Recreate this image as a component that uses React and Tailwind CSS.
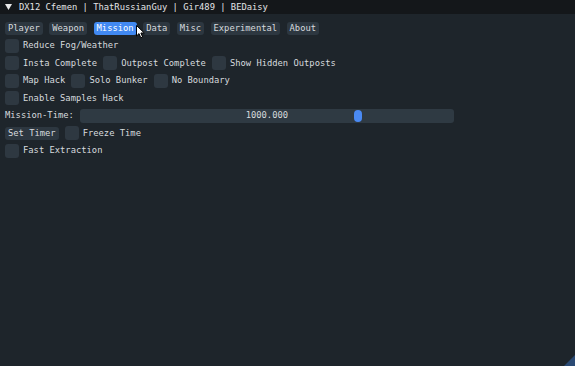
import React from "react";

const font = { fontFamily: '"DejaVu Sans Mono", "Liberation Mono", monospace' };

function Tab({ label, active }) {
  return (
    <div
      className={
        "h-[13px] px-[3px] flex items-center rounded-[3px] leading-none " +
        (active ? "bg-[#4189f2] text-white" : "bg-[#2d3740] text-[#d6dade]")
      }
    >
      {label}
    </div>
  );
}

function Check({ label }) {
  return (
    <div className="flex items-center gap-[4px]">
      <div className="w-[14px] h-[14px] rounded-[3px] bg-[#2e3841]" />
      <span className="leading-none">{label}</span>
    </div>
  );
}

function Row({ children }) {
  return <div className="h-[14px] flex items-center gap-[6px]">{children}</div>;
}

export default function App() {
  const tabs = ["Player", "Weapon", "Mission", "Data", "Misc", "Experimental", "About"];
  return (
    <div
      className="relative w-[575px] h-[366px] overflow-hidden bg-[#1e252b] text-[8.8px] text-[#d6dade]"
      style={font}
    >
      <div className="h-[14px] bg-[#14171a] flex items-center pl-[5px] gap-[7px] text-[#e2e4e6]">
        <svg width="7" height="6" viewBox="0 0 7 6">
          <path d="M0 0 L7 0 L3.5 6 Z" fill="#e8e8e8" />
        </svg>
        <span className="leading-none">DX12 Cfemen | ThatRussianGuy | Gir489 | BEDaisy</span>
      </div>

      <div className="flex flex-col gap-[3.5px] pt-[7px] px-[5px]">
        <div className="h-[14px] flex items-center gap-[6.5px]">
          {tabs.map((t) => (
            <Tab key={t} label={t} active={t === "Mission"} />
          ))}
        </div>
        <Row>
          <Check label="Reduce Fog/Weather" />
        </Row>
        <Row>
          <Check label="Insta Complete" />
          <Check label="Outpost Complete" />
          <Check label="Show Hidden Outposts" />
        </Row>
        <Row>
          <Check label="Map Hack" />
          <Check label="Solo Bunker" />
          <Check label="No Boundary" />
        </Row>
        <Row>
          <Check label="Enable Samples Hack" />
        </Row>
        <Row>
          <span className="leading-none">Mission-Time:</span>
          <div className="relative w-[374px] h-[14px] rounded-[3px] bg-[#2f3a43] flex items-center justify-center">
            <span className="leading-none">1000.000</span>
            <div className="absolute left-[274px] top-[1px] w-[8px] h-[12px] rounded-[4px] bg-[#4a8af4]" />
          </div>
        </Row>
        <Row>
          <div className="h-[13px] px-[3px] flex items-center rounded-[3px] bg-[#2d3740] leading-none">
            Set Timer
          </div>
          <Check label="Freeze Time" />
        </Row>
        <Row>
          <Check label="Fast Extraction" />
        </Row>
      </div>

      <svg className="absolute right-0 bottom-0" width="11" height="11" viewBox="0 0 11 11">
        <path d="M11 0 L11 11 L0 11 Z" fill="#2a4a74" />
      </svg>

      <svg className="absolute left-[136px] top-[25px]" width="10" height="14" viewBox="0 0 10 14">
        <path
          d="M0.5 0.5 L0.5 11 L3 8.6 L4.8 12.8 L6.6 12 L4.9 8 L8.3 8 Z"
          fill="#ffffff"
          stroke="#000000"
          strokeWidth="1"
          strokeLinejoin="round"
        />
      </svg>
    </div>
  );
}
